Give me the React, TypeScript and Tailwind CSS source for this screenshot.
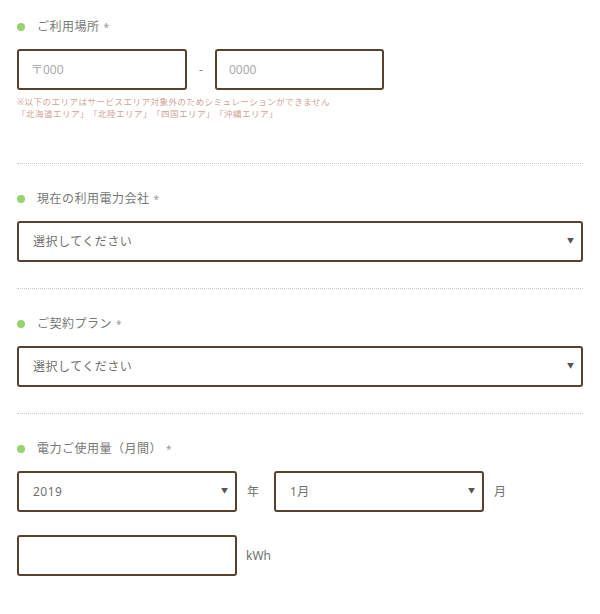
import React from 'react';

const font = { fontFamily: '"Noto Sans", "Noto Sans CJK JP", sans-serif' };

const Label = ({ text, className = '' }: { text: string; className?: string }) => (
  <div className={`flex items-center h-[18px] ${className}`}>
    <span className="w-[8px] h-[8px] rounded-full bg-[#94d46e]" />
    <span className="ml-[12px] text-[12px] text-[#777] tracking-[0.5px]">{text}</span>
    <span className="ml-[4px] text-[10px] text-[#999]">*</span>
  </div>
);

const SelectBox = ({ value, className = '' }: { value: string; className?: string }) => (
  <div
    className={`h-[41px] border-2 border-[#56422f] rounded-[3px] flex items-center justify-between pl-[14px] pr-[7px] bg-white ${className}`}
  >
    <span className="text-[12px] text-[#707070] tracking-[0.5px]">{value}</span>
    <span className="text-[7px] text-[#555]">▼</span>
  </div>
);

const Divider = ({ className = '' }: { className?: string }) => (
  <div className={`border-t border-dotted border-[#c8c8c8] ${className}`} />
);

export default function App() {
  return (
    <div className="w-[600px] h-[614px] bg-white px-[17px] pt-[18px] overflow-hidden" style={font}>
      <div className="w-[566px]">
        {/* ご利用場所 */}
        <Label text="ご利用場所" />
        <div className="mt-[13px] flex items-center">
          <div className="w-[170px] h-[41px] border-2 border-[#56422f] rounded-[3px] flex items-center pl-[12px]">
            <span className="text-[12px] text-[#aaa]">〒000</span>
          </div>
          <div className="w-[28px] text-center text-[12px] text-[#888]">-</div>
          <div className="w-[169px] h-[41px] border-2 border-[#56422f] rounded-[3px] flex items-center pl-[12px]">
            <span className="text-[12px] text-[#aaa]">0000</span>
          </div>
        </div>
        <div className="mt-[6px] text-[8.5px] leading-[12px] text-[#cfa496] tracking-[0.5px] [text-spacing-trim:space-all]">
          <div>※以下のエリアはサービスエリア対象外のためシミュレーションができません</div>
          <div>「北海道エリア」「北陸エリア」「四国エリア」「沖縄エリア」</div>
        </div>
        <Divider className="mt-[43px]" />

        {/* 現在の利用電力会社 */}
        <Label text="現在の利用電力会社" className="mt-[26px]" />
        <SelectBox value="選択してください" className="mt-[13px]" />
        <Divider className="mt-[26px]" />

        {/* ご契約プラン */}
        <Label text="ご契約プラン" className="mt-[26px]" />
        <SelectBox value="選択してください" className="mt-[13px]" />
        <Divider className="mt-[26px]" />

        {/* 電力ご使用量（月間） */}
        <Label text="電力ご使用量（月間）" className="mt-[26px]" />
        <div className="mt-[13px] flex items-center">
          <SelectBox value="2019" className="w-[220px]" />
          <span className="w-[37px] pl-[10px] text-[12px] text-[#707070]">年</span>
          <SelectBox value="1月" className="w-[210px]" />
          <span className="pl-[10px] text-[12px] text-[#707070]">月</span>
        </div>
        <div className="mt-[23px] flex items-center">
          <div className="w-[220px] h-[41px] border-2 border-[#56422f] rounded-[3px]" />
          <span className="pl-[9px] text-[12px] text-[#707070]">kWh</span>
        </div>
      </div>
    </div>
  );
}
